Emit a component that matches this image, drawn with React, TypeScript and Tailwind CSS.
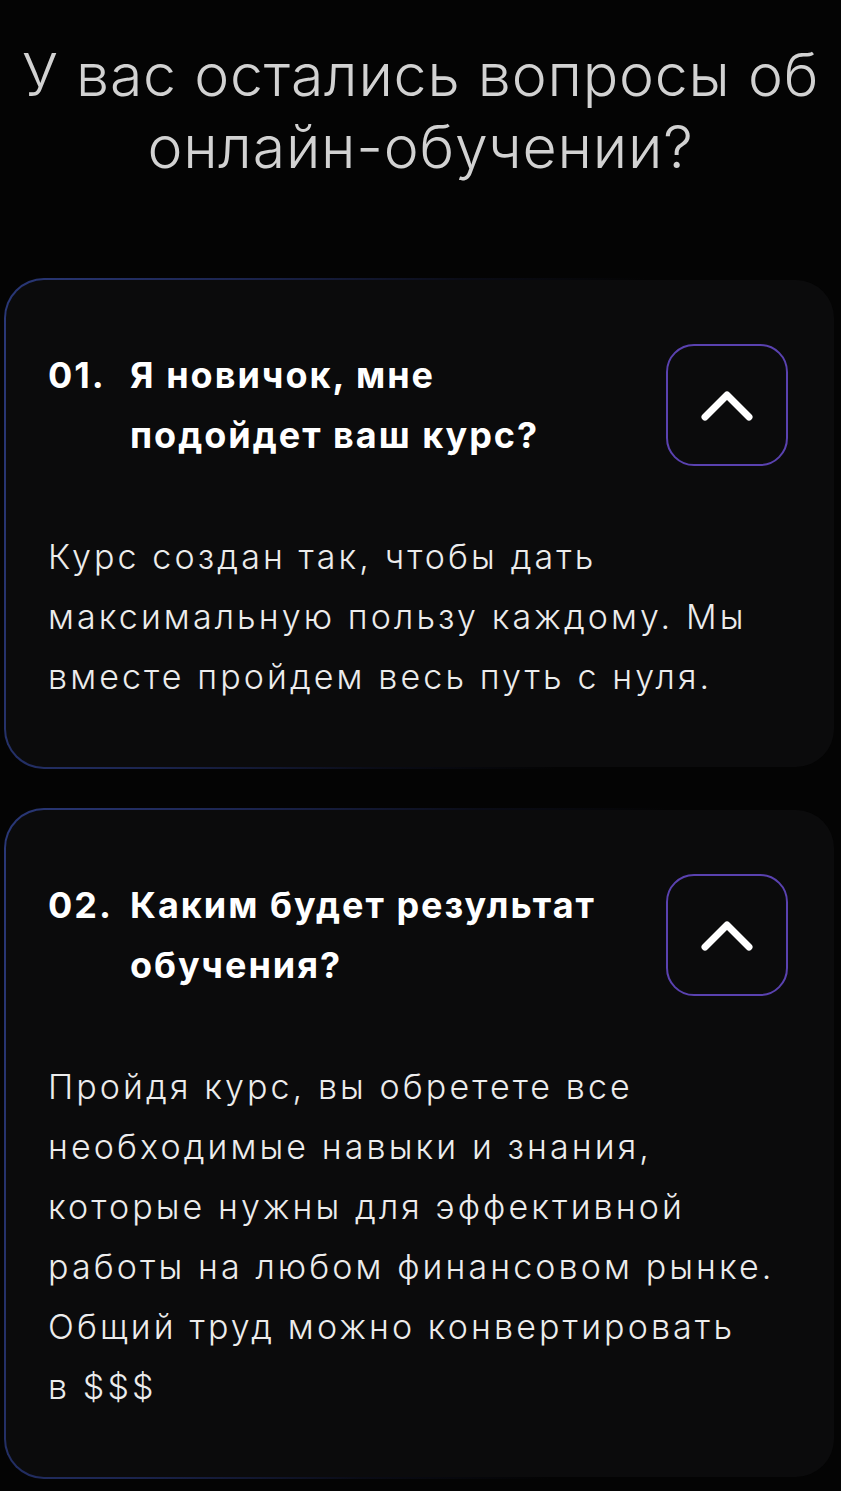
import React from 'react';

const faq = [
  {
    num: '01.',
    q: ['Я новичок, мне', 'подойдет ваш курс?'],
    a: ['Курс создан так, чтобы дать', 'максимальную пользу каждому. Мы', 'вместе пройдем весь путь с нуля.'],
  },
  {
    num: '02.',
    q: ['Каким будет результат', 'обучения?'],
    a: [
      'Пройдя курс, вы обретете все',
      'необходимые навыки и знания,',
      'которые нужны для эффективной',
      'работы на любом финансовом рынке.',
      'Общий труд можно конвертировать',
      'в $$$',
    ],
  },
];

function Chevron() {
  return (
    <svg width="56" height="36" viewBox="0 0 56 36" fill="none">
      <path d="M6 30 L28 8 L50 30" stroke="white" strokeWidth="7" strokeLinecap="round" strokeLinejoin="round" />
    </svg>
  );
}

export default function App() {
  return (
    <div className="min-h-[1491px] bg-[#040404] pt-[39px] pb-[16px] font-['Inter','Liberation_Sans',Arial,sans-serif]">
      <h1 className="text-center text-[59px] leading-[72px] font-light text-[#d2d2d2] tracking-[0.8px]">
        У вас остались вопросы об
        <br />
        онлайн-обучении?
      </h1>

      <div className="mt-[95px] flex flex-col gap-[39px] pl-[4px] pr-[7px]">
        {faq.map((item) => (
          <div
            key={item.num}
            className="rounded-[40px] bg-[linear-gradient(100deg,#2a3878_0%,#1c2550_25%,rgba(20,24,50,0.4)_50%,transparent_70%)] pt-[2px] pb-[2px] pl-[2px]"
          >
            <div className="rounded-[38px] bg-[#0b0b0c] pl-[42px] pr-[44px] pt-[64px] pb-[60px]">
              <div className="flex items-center justify-between">
                <div className="flex text-[36px] leading-[60px] font-bold tracking-[2px] text-white">
                  <span className="w-[82px] shrink-0">{item.num}</span>
                  <span>
                    {item.q.map((l) => (
                      <span key={l} className="block whitespace-nowrap">{l}</span>
                    ))}
                  </span>
                </div>
                <button className="mr-[2px] flex h-[122px] w-[122px] shrink-0 items-center justify-center rounded-[28px] border-2 border-[#5a42b0] bg-transparent">
                  <Chevron />
                </button>
              </div>
              <p className="mt-[61px] text-[34px] leading-[60px] font-light tracking-[3.1px] text-[#ececec]">
                {item.a.map((l) => (
                  <span key={l} className="block whitespace-nowrap">{l}</span>
                ))}
              </p>
            </div>
          </div>
        ))}
      </div>
    </div>
  );
}
